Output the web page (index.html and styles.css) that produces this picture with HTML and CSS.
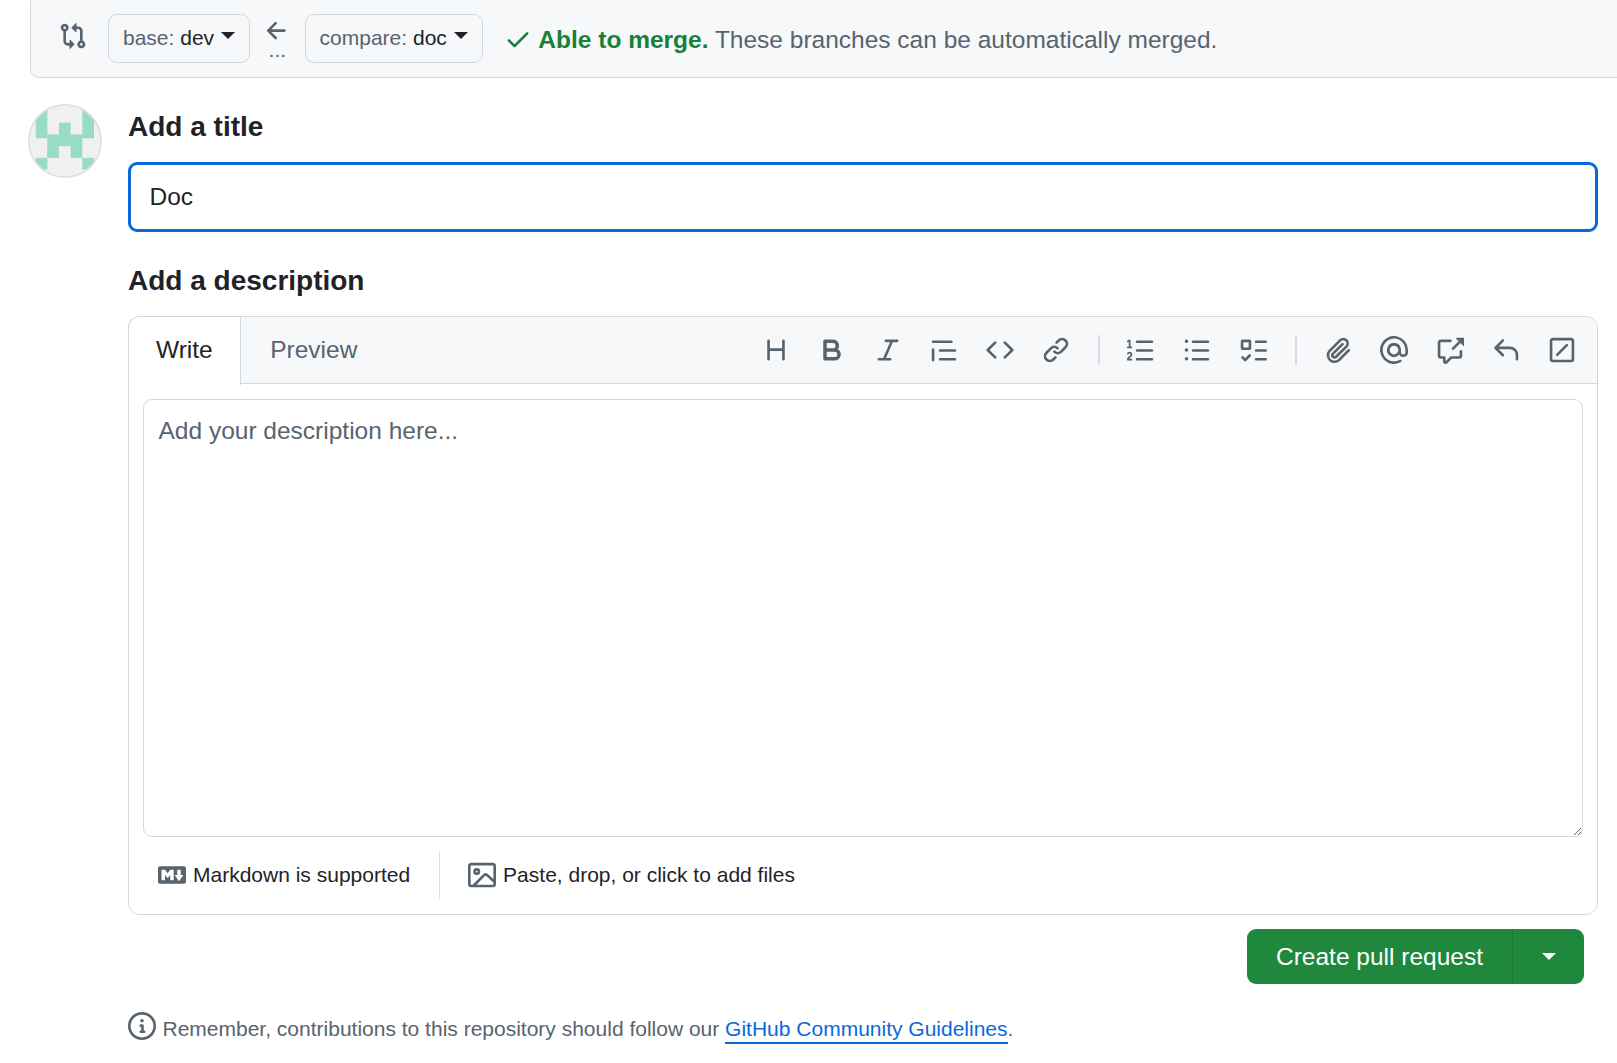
FILE: index.html
```html
<!DOCTYPE html>
<html lang="en">
<head>
<meta charset="utf-8">
<title>Open a pull request</title>
<link rel="stylesheet" href="styles.css">
</head>
<body>
<div class="page">
  <div class="range-bar">
    <svg class="icon compare-icon" viewBox="0 0 16 16"><path d="M9.573.677A.25.25 0 0 1 10 .854V2.5h1A2.5 2.5 0 0 1 13.5 5v5.628a2.251 2.251 0 1 1-1.5 0V5a1 1 0 0 0-1-1h-1v1.646a.25.25 0 0 1-.427.177L7.177 3.427a.25.25 0 0 1 0-.354ZM6 12v-1.646a.25.25 0 0 1 .427-.177l2.396 2.396a.25.25 0 0 1 0 .354l-2.396 2.396A.25.25 0 0 1 6 15.146V13.5H5A2.5 2.5 0 0 1 2.5 11V5.372a2.25 2.25 0 1 1 1.5 0V11a1 1 0 0 0 1 1ZM4 3.25a.75.75 0 1 0-1.5 0 .75.75 0 0 0 1.5 0ZM12.75 12a.75.75 0 1 0 0 1.5.75.75 0 0 0 0-1.5Z"/></svg>
    <div class="branch-btn"><span><span class="branch-label">base:</span> <span class="branch-name">dev</span></span><span class="caret"></span></div>
    <div class="range-sep">
      <svg class="icon arrow-icon" viewBox="0 0 16 16"><path d="M7.78 12.53a.75.75 0 0 1-1.06 0L2.47 8.28a.75.75 0 0 1 0-1.06l4.25-4.25a.751.751 0 0 1 1.042.018.751.751 0 0 1 .018 1.042L4.81 7h7.44a.75.75 0 0 1 0 1.5H4.81l2.97 2.97a.75.75 0 0 1 0 1.06Z"/></svg>
      <span class="dots">...</span>
    </div>
    <div class="branch-btn"><span><span class="branch-label">compare:</span> <span class="branch-name">doc</span></span><span class="caret"></span></div>
    <svg class="icon check-icon" viewBox="0 0 16 16"><path d="M13.78 4.22a.75.75 0 0 1 0 1.06l-7.25 7.25a.75.75 0 0 1-1.06 0L2.22 9.28a.751.751 0 0 1 .018-1.042.751.751 0 0 1 1.042-.018L6 10.94l6.72-6.72a.75.75 0 0 1 1.06 0Z"/></svg>
    <p class="merge-msg"><strong>Able to merge.</strong> These branches can be automatically merged.</p>
  </div>

  <div class="compose">
    <svg class="avatar" viewBox="0 0 74 74">
      <defs><clipPath id="avatar-clip"><circle cx="37" cy="37" r="36.5"/></clipPath></defs>
      <g clip-path="url(#avatar-clip)">
        <rect width="74" height="74" fill="#f0f0f0"/>
        <g fill="#98dcc5">
          <rect x="7.7" y="-1.7" width="11.7" height="36"/>
          <rect x="54.3" y="-1.7" width="11.7" height="36"/>
          <rect x="30.9" y="18.7" width="11.7" height="23.4"/>
          <rect x="19.2" y="30.4" width="35.1" height="11.7"/>
          <rect x="19.2" y="42.1" width="11.7" height="11.7"/>
          <rect x="42.6" y="42.1" width="11.7" height="11.7"/>
          <rect x="7.7" y="53.8" width="11.7" height="11.7"/>
          <rect x="54.3" y="53.8" width="11.7" height="11.7"/>
        </g>
      </g>
      <circle cx="37" cy="37" r="36.2" fill="none" stroke="#dedede" stroke-width="1.5"/>
    </svg>

    <div class="form">
      <label class="field-label title-label" for="pr-title">Add a title</label>
      <input class="title-input" id="pr-title" type="text" value="Doc">

      <label class="field-label desc-label" for="pr-body">Add a description</label>
      <div class="editor">
        <div class="editor-head">
          <div class="tabs">
            <div class="tab tab-active">Write</div>
            <div class="tab tab-preview">Preview</div>
          </div>
          <div class="toolbar">
            <div class="tool-group">
              <svg class="icon" viewBox="0 0 16 16"><path d="M3.75 2a.75.75 0 0 1 .75.75V7h7V2.75a.75.75 0 0 1 1.5 0v10.5a.75.75 0 0 1-1.5 0V8.5h-7v4.75a.75.75 0 0 1-1.5 0V2.75A.75.75 0 0 1 3.75 2Z"/></svg>
              <svg class="icon" viewBox="0 0 16 16"><path d="M4 2h4.5a3.501 3.501 0 0 1 2.852 5.53A3.499 3.499 0 0 1 9.5 14H4a1 1 0 0 1-1-1V3a1 1 0 0 1 1-1Zm1 7v3h4.5a1.5 1.5 0 0 0 0-3Zm3.5-2a1.5 1.5 0 0 0 0-3H5v3Z"/></svg>
              <svg class="icon" viewBox="0 0 16 16"><path d="M6 2.75A.75.75 0 0 1 6.75 2h6.5a.75.75 0 0 1 0 1.5h-2.505l-3.858 9H9.25a.75.75 0 0 1 0 1.5h-6.5a.75.75 0 0 1 0-1.5h2.505l3.858-9H6.75A.75.75 0 0 1 6 2.75Z"/></svg>
              <svg class="icon" viewBox="0 0 16 16"><path d="M1.75 2.5h10.5a.75.75 0 0 1 0 1.5H1.75a.75.75 0 0 1 0-1.5Zm4 5h8.5a.75.75 0 0 1 0 1.5h-8.5a.75.75 0 0 1 0-1.5Zm0 5h8.5a.75.75 0 0 1 0 1.5h-8.5a.75.75 0 0 1 0-1.5ZM2.5 7.75v6a.75.75 0 0 1-1.5 0v-6a.75.75 0 0 1 1.5 0Z"/></svg>
              <svg class="icon" viewBox="0 0 16 16"><path d="m11.28 3.22 4.25 4.25a.75.75 0 0 1 0 1.06l-4.25 4.25a.749.749 0 0 1-1.275-.326.749.749 0 0 1 .215-.734L13.94 8l-3.72-3.72a.749.749 0 0 1 .326-1.275.749.749 0 0 1 .734.215Zm-6.56 0a.751.751 0 0 1 1.042.018.751.751 0 0 1 .018 1.042L2.06 8l3.72 3.72a.749.749 0 0 1-.326 1.275.749.749 0 0 1-.734-.215L.47 8.53a.75.75 0 0 1 0-1.06Z"/></svg>
              <svg class="icon" viewBox="0 0 16 16"><path d="m7.775 3.275 1.25-1.25a3.5 3.5 0 1 1 4.95 4.95l-2.5 2.5a3.5 3.5 0 0 1-4.95 0 .751.751 0 0 1 .018-1.042.751.751 0 0 1 1.042-.018 1.998 1.998 0 0 0 2.83 0l2.5-2.5a2.002 2.002 0 0 0-2.83-2.83l-1.25 1.25a.751.751 0 0 1-1.042-.018.751.751 0 0 1-.018-1.042Zm-4.69 9.64a1.998 1.998 0 0 0 2.83 0l1.25-1.25a.751.751 0 0 1 1.042.018.751.751 0 0 1 .018 1.042l-1.25 1.25a3.5 3.5 0 1 1-4.95-4.95l2.5-2.5a3.5 3.5 0 0 1 4.95 0 .751.751 0 0 1-.018 1.042.751.751 0 0 1-1.042.018 1.998 1.998 0 0 0-2.83 0l-2.5 2.5a1.998 1.998 0 0 0 0 2.83Z"/></svg>
            </div>
            <div class="tool-sep"></div>
            <div class="tool-group">
              <svg class="icon" viewBox="0 0 16 16"><path d="M5 3.25a.75.75 0 0 1 .75-.75h8.5a.75.75 0 0 1 0 1.5h-8.5A.75.75 0 0 1 5 3.25Zm0 5a.75.75 0 0 1 .75-.75h8.5a.75.75 0 0 1 0 1.5h-8.5A.75.75 0 0 1 5 8.25Zm0 5a.75.75 0 0 1 .75-.75h8.5a.75.75 0 0 1 0 1.5h-8.5a.75.75 0 0 1-.75-.75ZM.924 10.32a.5.5 0 0 1-.851-.525l.001-.001.001-.002.002-.004.007-.011c.097-.144.215-.273.348-.384.228-.19.588-.392 1.068-.392.468 0 .858.181 1.126.484.259.294.377.673.377 1.038 0 .987-.686 1.495-1.156 1.845l-.047.035c-.303.225-.522.4-.654.597h1.357a.5.5 0 0 1 0 1H.5a.5.5 0 0 1-.5-.5c0-1.005.692-1.52 1.167-1.875l.035-.025c.531-.396.8-.625.8-1.078a.57.57 0 0 0-.128-.376C1.806 10.068 1.695 10 1.5 10a.658.658 0 0 0-.429.163.835.835 0 0 0-.144.153ZM2.003 2.5V6h.503a.5.5 0 0 1 0 1H.5a.5.5 0 0 1 0-1h.503V3.308l-.28.14a.5.5 0 0 1-.446-.895l1.003-.5a.5.5 0 0 1 .723.447Z"/></svg>
              <svg class="icon" viewBox="0 0 16 16"><path d="M5.75 2.5h8.5a.75.75 0 0 1 0 1.5h-8.5a.75.75 0 0 1 0-1.5Zm0 5h8.5a.75.75 0 0 1 0 1.5h-8.5a.75.75 0 0 1 0-1.5Zm0 5h8.5a.75.75 0 0 1 0 1.5h-8.5a.75.75 0 0 1 0-1.5ZM2 14a1 1 0 1 1 0-2 1 1 0 0 1 0 2Zm1-6a1 1 0 1 1-2 0 1 1 0 0 1 2 0ZM2 4a1 1 0 1 1 0-2 1 1 0 0 1 0 2Z"/></svg>
              <svg class="icon" viewBox="0 0 16 16"><path d="M2 2h4a1 1 0 0 1 1 1v4a1 1 0 0 1-1 1H2a1 1 0 0 1-1-1V3a1 1 0 0 1 1-1Zm4.655 8.595a.75.75 0 0 1 0 1.06L4.03 14.28a.75.75 0 0 1-1.06 0l-1.5-1.5a.749.749 0 0 1 .326-1.275.749.749 0 0 1 .734.215l.97.97 2.095-2.095a.75.75 0 0 1 1.06 0ZM9.75 2.5h5.5a.75.75 0 0 1 0 1.5h-5.5a.75.75 0 0 1 0-1.5Zm0 5h5.5a.75.75 0 0 1 0 1.5h-5.5a.75.75 0 0 1 0-1.5Zm0 5h5.5a.75.75 0 0 1 0 1.5h-5.5a.75.75 0 0 1 0-1.5Zm-7.25-9v3h3v-3Z"/></svg>
            </div>
            <div class="tool-sep"></div>
            <div class="tool-group">
              <svg class="icon" viewBox="0 0 16 16"><path d="M12.212 3.02a1.753 1.753 0 0 0-2.478.003l-5.83 5.83a3.007 3.007 0 0 0-.88 2.127c0 .795.315 1.551.88 2.116.567.567 1.333.89 2.126.89.79 0 1.548-.321 2.116-.89l5.48-5.48a.75.75 0 0 1 1.061 1.06l-5.48 5.48a4.492 4.492 0 0 1-3.177 1.33c-1.2 0-2.345-.487-3.187-1.33a4.483 4.483 0 0 1-1.32-3.177c0-1.195.475-2.341 1.32-3.186l5.83-5.83a3.25 3.25 0 0 1 5.553 2.297c0 .863-.343 1.691-.953 2.301L7.439 12.39c-.375.377-.884.59-1.416.593a1.998 1.998 0 0 1-1.412-.593 1.992 1.992 0 0 1 0-2.828l5.48-5.48a.751.751 0 0 1 1.042.018.751.751 0 0 1 .018 1.042l-5.48 5.48a.492.492 0 0 0 0 .707.499.499 0 0 0 .352.154.51.51 0 0 0 .356-.154l5.833-5.827a1.755 1.755 0 0 0 0-2.481Z"/></svg>
              <svg class="icon" viewBox="0 0 16 16"><path d="M4.75 2.37a6.501 6.501 0 0 0 6.5 11.26.75.75 0 0 1 .75 1.298A7.999 7.999 0 0 1 .989 4.148 8 8 0 0 1 16 7.75v1.5a2.75 2.75 0 0 1-5.072 1.475 3.999 3.999 0 0 1-6.65-4.19A4 4 0 0 1 12 8v1.25a1.25 1.25 0 0 0 2.5 0V7.867a6.5 6.5 0 0 0-9.75-5.496ZM10.5 8a2.5 2.5 0 1 0-5 0 2.5 2.5 0 0 0 5 0Z"/></svg>
              <svg class="icon" viewBox="0 0 16 16"><path d="M2.75 3.5a.25.25 0 0 0-.25.25v7.5c0 .138.112.25.25.25h2a.75.75 0 0 1 .75.75v2.19l2.72-2.72a.749.749 0 0 1 .53-.22h4.5a.25.25 0 0 0 .25-.25v-2.5a.75.75 0 0 1 1.5 0v2.5A1.75 1.75 0 0 1 13.25 13H9.06l-2.573 2.573A1.458 1.458 0 0 1 4 14.543V13H2.75A1.75 1.75 0 0 1 1 11.25v-7.5C1 2.784 1.784 2 2.75 2h5.5a.75.75 0 0 1 0 1.5ZM16 1.25v4.146a.25.25 0 0 1-.427.177L14.03 4.03l-3.75 3.75a.749.749 0 0 1-1.275-.326.749.749 0 0 1 .215-.734l3.75-3.75-1.543-1.543A.25.25 0 0 1 11.604 1h4.146a.25.25 0 0 1 .25.25Z"/></svg>
              <svg class="icon" viewBox="0 0 16 16"><path d="M6.78 1.97a.75.75 0 0 1 0 1.06L3.81 6h6.44A4.75 4.75 0 0 1 15 10.75v2.5a.75.75 0 0 1-1.5 0v-2.5a3.25 3.25 0 0 0-3.25-3.25H3.81l2.97 2.97a.749.749 0 0 1-.326 1.275.749.749 0 0 1-.734-.215L1.47 7.28a.75.75 0 0 1 0-1.06l4.25-4.25a.75.75 0 0 1 1.06 0Z"/></svg>
              <svg class="icon" viewBox="0 0 16 16"><path d="M1 2.75C1 1.784 1.784 1 2.75 1h10.5c.966 0 1.75.784 1.75 1.75v10.5A1.75 1.75 0 0 1 13.25 15H2.75A1.75 1.75 0 0 1 1 13.25Zm1.75-.25a.25.25 0 0 0-.25.25v10.5c0 .138.112.25.25.25h10.5a.25.25 0 0 0 .25-.25V2.75a.25.25 0 0 0-.25-.25ZM11.28 4.72a.75.75 0 0 1 0 1.06l-5.5 5.5a.75.75 0 0 1-1.06-1.06l5.5-5.5a.75.75 0 0 1 1.06 0Z"/></svg>
            </div>
          </div>
        </div>
        <div class="editor-body">
          <textarea class="desc-input" id="pr-body" placeholder="Add your description here..."></textarea>
          <div class="editor-foot">
            <div class="foot-item foot-md">
              <svg class="icon" viewBox="0 0 16 16"><path d="M14.85 3c.63 0 1.15.52 1.14 1.15v7.7c0 .63-.51 1.15-1.15 1.15H1.15C.52 13 0 12.48 0 11.84V4.15C0 3.52.52 3 1.15 3ZM9 11V5H7L5.5 7 4 5H2v6h2V8l1.5 1.92L7 8v3Zm2.99.5L14.5 8H13V5h-2v3H9.5Z"/></svg>
              <span>Markdown is supported</span>
            </div>
            <div class="foot-item foot-files">
              <svg class="icon" viewBox="0 0 16 16"><path d="M16 13.25A1.75 1.75 0 0 1 14.25 15H1.75A1.75 1.75 0 0 1 0 13.25V2.75C0 1.784.784 1 1.75 1h12.5c.966 0 1.75.784 1.75 1.75ZM1.75 2.5a.25.25 0 0 0-.25.25v10.5c0 .138.112.25.25.25h.94l.03-.03 6.077-6.078a1.75 1.75 0 0 1 2.412-.06L14.5 10.31V2.75a.25.25 0 0 0-.25-.25Zm12.5 11a.25.25 0 0 0 .25-.25v-.917l-4.298-3.889a.25.25 0 0 0-.344.009L4.81 13.5ZM7 6a2 2 0 1 1-3.999.001A2 2 0 0 1 7 6ZM5.5 6a.5.5 0 1 0-1 0 .5.5 0 0 0 1 0Z"/></svg>
              <span>Paste, drop, or click to add files</span>
            </div>
          </div>
        </div>
      </div>

      <div class="actions">
        <div class="btn-group">
          <div class="btn-main">Create pull request</div>
          <div class="btn-drop"><span class="caret caret-white"></span></div>
        </div>
      </div>

      <p class="reminder">
        <svg class="icon info-icon" viewBox="0 0 16 16"><path d="M0 8a8 8 0 1 1 16 0A8 8 0 0 1 0 8Zm8-6.5a6.5 6.5 0 1 0 0 13 6.5 6.5 0 0 0 0-13ZM6.5 7.75A.75.75 0 0 1 7.25 7h1a.75.75 0 0 1 .75.75v2.75h.25a.75.75 0 0 1 0 1.5h-2a.75.75 0 0 1 0-1.5h.25v-2h-.25a.75.75 0 0 1-.75-.75ZM8 6a1 1 0 1 1 0-2 1 1 0 0 1 0 2Z"/></svg>
        <span class="reminder-text">Remember, contributions to this repository should follow our <a class="guide-link" href="#">GitHub Community Guidelines</a>.</span>
      </p>
    </div>
  </div>
</div>
</body>
</html>
```
FILE: styles.css
```css
* { box-sizing: border-box; }
html, body { margin: 0; padding: 0; height: 100%; overflow: hidden; background: #fff; }
body { font-family: "Liberation Sans", Arial, sans-serif; font-size: 21px; color: #1f2328; }
.page { padding: 0 0 0 28px; height: 1063px; overflow: hidden; }
.icon { width: 28px; height: 28px; fill: #59636e; flex: none; display: block; }

.range-bar {
  display: flex; align-items: center;
  margin: -6px -40px 0 2px; height: 84px; padding: 6px 0 0 28px;
  background: #f6f8fa; border: 1.5px solid #d1d9e0; border-radius: 9px;
}
.compare-icon { margin: 0 21px 6px 0; }
.branch-btn {
  height: 49px; margin-bottom: 2px; padding: 0 14px; display: flex; align-items: center; white-space: pre;
  border: 1.5px solid #d1d9e0; border-radius: 9px; background: #f6f8fa;
}
.branch-label { color: #59636e; }
.branch-name { color: #1f2328; }
.caret { display: inline-block; width: 0; height: 0; margin-left: 7px; border: 7px solid transparent; border-top-color: #1f2328; border-bottom: 0; transform: translateY(-3px); }
.range-sep { width: 54.5px; display: flex; flex-direction: column; align-items: center; height: 49px; }
.arrow-icon { margin-top: 2px; }
.dots { color: #59636e; font-size: 21px; line-height: 12px; margin-top: -1px; }
.check-icon { margin-left: 21px; fill: #1a7f37; }
.merge-msg { margin: 1px 0 0 6.5px; font-size: 24.5px; color: #59636e; white-space: nowrap; }
.merge-msg strong { color: #1a7f37; }

.compose { display: flex; margin-top: 26px; }
.avatar { width: 74px; height: 74px; flex: none; display: block; }
.form { margin-left: 26px; width: 1470px; flex: none; }
.field-label { display: block; font-size: 28px; font-weight: 700; color: #1f2328; line-height: 36px; }
.title-label { margin-top: 5px; }
.title-input {
  display: block; width: 100%; height: 70px; margin-top: 17px; padding: 0 18.5px;
  font: 24.5px "Liberation Sans", Arial, sans-serif; color: #1f2328;
  border: 3px solid #0969da; border-radius: 9px; background: #fff; outline: none;
}
.desc-label { margin-top: 31px; }

.editor { margin-top: 17px; border: 1.5px solid #d1d9e0; border-radius: 12px; }
.editor-head { display: flex; justify-content: space-between; height: 67px; background: #f6f8fa; border-bottom: 1.5px solid #d1d9e0; border-radius: 12px 12px 0 0; }
.tabs { display: flex; }
.tab { height: 67px; padding: 0 28px; font-size: 24.5px; line-height: 66px; color: #59636e; }
.tab-active { margin: -1.5px 0 0 -1.5px; height: 69px; padding: 0.5px 27.5px 0; color: #1f2328; background: #fff; border: 1.5px solid #d1d9e0; border-bottom: 0; border-radius: 12px 0 0 0; }
.tab-preview { padding-left: 29px; }
.toolbar { display: flex; align-items: center; padding-right: 21px; }
.tool-group { display: flex; gap: 28px; }
.tool-sep { width: 1.5px; height: 30px; margin: 0 27.5px 0 28px; background: #d8dee4; }

.editor-body { padding: 14.5px 14px 0; }
.desc-input {
  display: block; width: 100%; height: 438.5px; padding: 16.5px 14.5px; resize: vertical;
  font: 24.5px/30px "Liberation Sans", Arial, sans-serif; color: #1f2328;
  border: 1.5px solid #d1d9e0; border-radius: 9px; background: #fff; outline: none;
}
.desc-input::placeholder { color: #59636e; opacity: 1; }
.editor-foot { display: flex; height: 77px; padding-bottom: 1px; align-items: center; }
.foot-item { display: flex; align-items: center; gap: 7px; height: 48px; }
.foot-md { padding: 0 29px 0 15px; border-right: 1.5px solid #d8dee4; }
.foot-files { padding-left: 27.5px; gap: 7.5px; }

.actions { display: flex; justify-content: flex-end; margin-top: 14px; padding-right: 14px; }
.btn-group { display: flex; height: 55px; border-radius: 9px; background: #1f883d; color: #fff; font-size: 24.5px; }
.btn-main { padding: 0 29px; line-height: 56px; border-right: 1.5px solid #1c7a37; }
.btn-drop { width: 71px; display: flex; align-items: center; justify-content: center; }
.caret-white { margin: 0; border-top-color: #fff; transform: none; }

.reminder { display: flex; align-items: center; gap: 6.5px; margin: 27px 0 0; color: #59636e; font-size: 21px; white-space: nowrap; }
.reminder-text { margin-top: 6px; }
.guide-link { color: #0969da; text-decoration: none; padding-bottom: 2px; border-bottom: 2px solid #0969da; }
```
